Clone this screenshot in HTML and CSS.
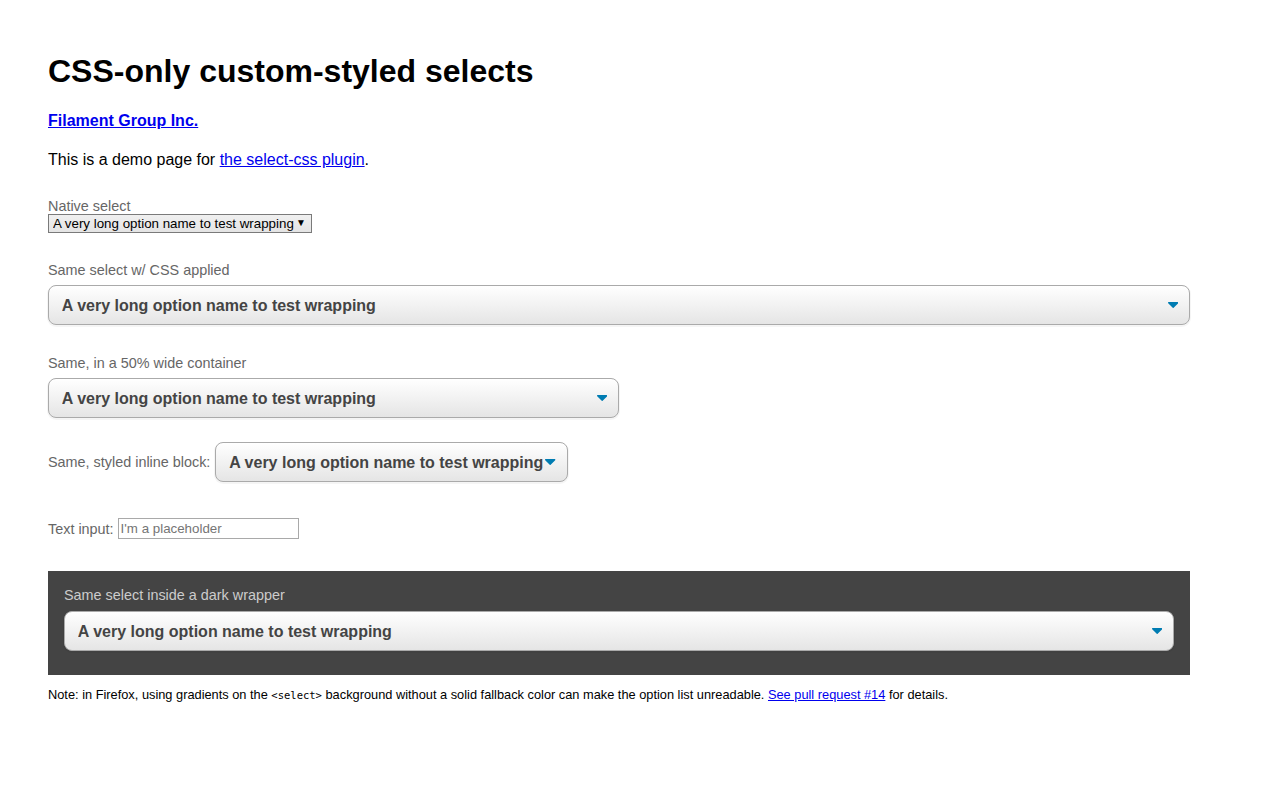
FILE: index.html
```html
<!DOCTYPE html>
<html lang="en">
<head>
<meta charset="utf-8">
<title>CSS-only custom-styled selects</title>
<link rel="stylesheet" href="styles.css">
</head>
<body>
<h1 class="title">CSS-only custom-styled selects</h1>
<p class="byline"><a href="#">Filament Group Inc.</a></p>
<p class="intro">This is a demo page for <a href="#">the select-css plugin</a>.</p>

<div class="field field-native">
  <label class="label" for="s0">Native select</label>
  <div class="native-wrap">
    <select id="s0" class="native"><option>A very long option name to test wrapping</option></select>
    <span class="native-arrow">▼</span>
  </div>
</div>

<div class="field field-css">
  <label class="label" for="s1">Same select w/ CSS applied</label>
  <div class="select-wrap">
    <select id="s1" class="select-css"><option>A very long option name to test wrapping</option></select>
    <svg class="arrow" viewBox="0 0 292.4 292.4" width="10.4" height="10.4"><path fill="#007CB2" d="M287 69.4a17.6 17.6 0 0 0-13-5.4H18.4c-5 0-9.3 1.8-12.9 5.4A17.6 17.6 0 0 0 0 82.2c0 5 1.8 9.3 5.4 12.9l128 127.9c3.6 3.6 7.8 5.4 12.8 5.4s9.2-1.8 12.8-5.4L287 95c3.5-3.5 5.4-7.8 5.4-12.8 0-5-1.9-9.2-5.5-12.8z"/></svg>
  </div>
</div>

<div class="field field-half">
  <label class="label" for="s2">Same, in a 50% wide container</label>
  <div class="half">
    <div class="select-wrap">
      <select id="s2" class="select-css"><option>A very long option name to test wrapping</option></select>
      <svg class="arrow" viewBox="0 0 292.4 292.4" width="10.4" height="10.4"><path fill="#007CB2" d="M287 69.4a17.6 17.6 0 0 0-13-5.4H18.4c-5 0-9.3 1.8-12.9 5.4A17.6 17.6 0 0 0 0 82.2c0 5 1.8 9.3 5.4 12.9l128 127.9c3.6 3.6 7.8 5.4 12.8 5.4s9.2-1.8 12.8-5.4L287 95c3.5-3.5 5.4-7.8 5.4-12.8 0-5-1.9-9.2-5.5-12.8z"/></svg>
    </div>
  </div>
</div>

<div class="field field-inline">
  <label class="label" for="s3">Same, styled inline block:</label>
  <div class="select-wrap inline">
    <select id="s3" class="select-css"><option>A very long option name to test wrapping</option></select>
    <svg class="arrow" viewBox="0 0 292.4 292.4" width="10.4" height="10.4"><path fill="#007CB2" d="M287 69.4a17.6 17.6 0 0 0-13-5.4H18.4c-5 0-9.3 1.8-12.9 5.4A17.6 17.6 0 0 0 0 82.2c0 5 1.8 9.3 5.4 12.9l128 127.9c3.6 3.6 7.8 5.4 12.8 5.4s9.2-1.8 12.8-5.4L287 95c3.5-3.5 5.4-7.8 5.4-12.8 0-5-1.9-9.2-5.5-12.8z"/></svg>
  </div>
</div>

<div class="field field-text">
  <label class="label" for="t1">Text input:</label>
  <input id="t1" class="text-input" type="text" placeholder="I'm a placeholder">
</div>

<div class="dark">
  <label class="label" for="s4">Same select inside a dark wrapper</label>
  <div class="select-wrap">
    <select id="s4" class="select-css"><option>A very long option name to test wrapping</option></select>
    <svg class="arrow" viewBox="0 0 292.4 292.4" width="10.4" height="10.4"><path fill="#007CB2" d="M287 69.4a17.6 17.6 0 0 0-13-5.4H18.4c-5 0-9.3 1.8-12.9 5.4A17.6 17.6 0 0 0 0 82.2c0 5 1.8 9.3 5.4 12.9l128 127.9c3.6 3.6 7.8 5.4 12.8 5.4s9.2-1.8 12.8-5.4L287 95c3.5-3.5 5.4-7.8 5.4-12.8 0-5-1.9-9.2-5.5-12.8z"/></svg>
  </div>
</div>

<p class="note">Note: in Firefox, using gradients on the <code>&lt;select&gt;</code> background without a solid fallback color can make the option list unreadable. <a href="#">See pull request #14</a> for details.</p>
</body>
</html>
```

FILE: styles.css
```css
html, body {
  margin: 0;
  background: #fff;
}
body {
  font-family: "Liberation Sans", Arial, sans-serif;
  font-size: 16px;
  line-height: 1.5;
  color: #000;
  padding: 53px 91px 40px 48px;
  width: 1142px;
}
a { color: #0000ee; }
.title {
  font-size: 32px;
  font-weight: bold;
  line-height: normal;
  margin: 0 0 19px;
}
.byline {
  margin: 0;
  font-weight: bold;
}
.intro {
  margin: 15px 0 0;
}
.label {
  display: block;
  font-size: 14.4px;
  line-height: normal;
  color: #666;
}
.field-native { margin-top: 26px; }
.field-native .label { margin-bottom: -1px; }
.native-wrap {
  position: relative;
  display: inline-block;
  vertical-align: top;
  margin-top: 1px;
}
.native {
  -webkit-appearance: none;
  appearance: none;
  display: block;
  box-sizing: border-box;
  height: 19px;
  width: 264px;
  margin: 0;
  padding: 0 16px 0 4px;
  font-family: "Liberation Sans", Arial, sans-serif;
  font-size: 13.33px;
  line-height: 17px;
  color: #000;
  border: 1px solid #7a7a7a;
  border-radius: 0;
  background: linear-gradient(#f0f0f0, #e4e4e4);
}
.native-arrow {
  position: absolute;
  right: 6px;
  top: 0;
  font-size: 10px;
  line-height: 18px;
  color: #000;
  pointer-events: none;
}
.field-css { margin-top: 25px; }
.field-half { margin-top: 30px; }
.field-css .label,
.field-half .label { margin-bottom: 7px; }
.dark .label { margin-bottom: 8px; }
.half { width: 50%; }
.select-wrap {
  position: relative;
}
.select-wrap.inline {
  display: inline-block;
}
.select-css {
  display: block;
  box-sizing: border-box;
  width: 100%;
  max-width: 100%;
  height: 40px;
  margin: 0;
  font-family: "Liberation Sans", Arial, sans-serif;
  font-size: 16px;
  font-weight: 700;
  line-height: 1.3;
  color: #444;
  padding: 9.6px 22.4px 8px 12.8px;
  border: 1px solid #aaa;
  border-radius: 8px;
  box-shadow: 0 1px 0 1px rgba(0, 0, 0, 0.04);
  -webkit-appearance: none;
  appearance: none;
  background-color: #fff;
  background-image: linear-gradient(to bottom, #ffffff 0%, #e5e5e5 100%);
}
.select-wrap.inline .select-css {
  width: auto;
}
.arrow {
  position: absolute;
  right: 12px;
  top: 50%;
  transform: translateY(-50%);
  pointer-events: none;
}
.field-inline {
  margin-top: 24px;
  display: flex;
  align-items: center;
  gap: 5px;
}
.field-inline .label { display: inline; }
.field-text {
  margin-top: 36px;
  display: flex;
  align-items: center;
  gap: 4px;
}
.field-text .label { display: inline; }
.text-input {
  box-sizing: border-box;
  width: 181px;
  height: 21px;
  margin: 0;
  padding: 1px 2px;
  font-family: "Liberation Sans", Arial, sans-serif;
  font-size: 13.33px;
  border: 1px solid #a9a9a9;
  border-radius: 0;
  background: #fff;
}
.text-input::placeholder { color: #757575; }
.dark {
  margin-top: 32px;
  background: #444;
  padding: 16px 16px 24px;
}
.dark .label { color: #ccc; }
.note {
  margin: 12px 0 0;
  font-size: 12.8px;
  line-height: normal;
}
.note code {
  font-family: "DejaVu Sans Mono", monospace;
  font-size: 10.5px;
}
```
